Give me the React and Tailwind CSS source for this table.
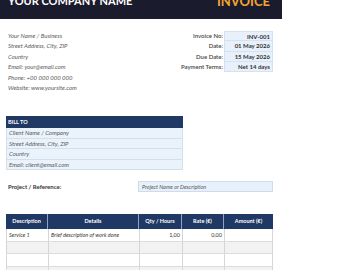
export default function App() {
  const font = { fontFamily: 'Lato, "Open Sans", sans-serif' };
  const infoLines = [
    "Your Name / Business",
    "Street Address, City, ZIP",
    "Country",
    "Email: your@email.com",
    "Phone: +00 000 000 000",
    "Website: www.yoursite.com",
  ];
  const meta = [
    ["Invoice No:", "INV-001"],
    ["Date:", "01 May 2026"],
    ["Due Date:", "15 May 2026"],
    ["Payment Terms:", "Net 14 days"],
  ];
  const bill = ["Client Name / Company", "Street Address, City, ZIP", "Country", "Email: client@email.com"];
  const cols = [
    ["Description", "w-[42px]"],
    ["Details", "w-[91px]"],
    ["Qty / Hours", "w-[43px]"],
    ["Rate (€)", "w-[42px]"],
    ["Amount (€)", "w-[49px]"],
  ];
  const rows = [
    ["Service 1", "Brief description of work done", "1,00", "0,00", ""],
    ["", "", "", "", ""],
    ["", "", "", "", ""],
    ["", "", "", "", ""],
  ];
  return (
    <div className="w-[340px] h-[270px] overflow-hidden bg-white" style={font}>
      {/* header */}
      <div className="w-[282px] h-[19px] bg-[#1b1b2e] flex justify-between items-start pl-[8px] pr-[12px] overflow-hidden">
        <span className="-mt-[5px] text-[11px] leading-none font-bold text-white whitespace-nowrap">YOUR COMPANY NAME</span>
        <span className="-mt-[5px] text-[13px] leading-none font-bold text-[#f2a431] whitespace-nowrap">INVOICE</span>
      </div>

      {/* info */}
      <div className="flex mt-[12px]">
        <div className="pl-[8px] w-[170px]">
          {infoLines.map((l) => (
            <div key={l} className="h-[10.4px] leading-[10.4px] text-[6px] italic text-[#5a5a5a] whitespace-nowrap">{l}</div>
          ))}
        </div>
        <div className="flex flex-col">
          {meta.map(([k, v], i) => (
            <div key={k} className="flex h-[10.3px]">
              <div className="w-[54px] text-right pr-[1px] text-[6px] leading-[10.3px] font-semibold text-[#444] whitespace-nowrap">{k}</div>
              <div className={"w-[49px] bg-[#e8f1fb] text-right pr-[2px] text-[6px] leading-[10.3px] font-bold text-[#333] whitespace-nowrap border-[#d6e2ef] border-x " + (i === 0 ? "border-t " : "") + "border-b"}>{v}</div>
            </div>
          ))}
        </div>
      </div>

      {/* bill to */}
      <div className="ml-[6px] mt-[23px] w-[177px]">
        <div className="h-[12px] bg-[#1f3864] pl-[2px] text-[5.5px] leading-[12px] font-bold text-white">BILL TO</div>
        {bill.map((l) => (
          <div key={l} className="h-[10.4px] bg-[#eaf3fc] border-x border-b border-[#d3dfeb] pl-[2px] text-[6px] leading-[10px] italic text-[#5a5a5a]">{l}</div>
        ))}
      </div>

      {/* project */}
      <div className="flex items-center mt-[11px]">
        <div className="pl-[8px] w-[138px] text-[6px] font-bold text-[#333]">Project / Reference:</div>
        <div className="w-[135px] h-[11px] bg-[#e8f1fb] border border-[#cddcec] pl-[3px] text-[5.5px] leading-[10px] italic text-[#555]">Project Name or Description</div>
      </div>

      {/* table */}
      <div className="ml-[6px] mt-[22px] w-[267px]">
        <div className="flex h-[15px] bg-[#1f3864]">
          {cols.map(([c, w], i) => (
            <div key={c} className={w + " text-center text-[5.5px] leading-[15px] font-bold text-white whitespace-nowrap " + (i < cols.length - 1 ? "border-r border-[#8ea2c4]" : "")}>{c}</div>
          ))}
        </div>
        {rows.map((r, ri) => (
          <div key={ri} className={"flex h-[12.6px] border-b border-[#dcdcdc] " + (ri % 2 === 1 ? "bg-[#f2f2f2]" : "bg-white")}>
            {r.map((c, ci) => (
              <div
                key={ci}
                className={
                  cols[ci][1] +
                  " border-l border-[#d6d6d6] text-[5.5px] leading-[12px] text-[#333] whitespace-nowrap " +
                  (ci === cols.length - 1 ? "border-r " : "") +
                  (ci < 2 ? "italic pl-[2px] " : "text-right pr-[2px] ")
                }
              >
                {c}
              </div>
            ))}
          </div>
        ))}
      </div>
    </div>
  );
}
